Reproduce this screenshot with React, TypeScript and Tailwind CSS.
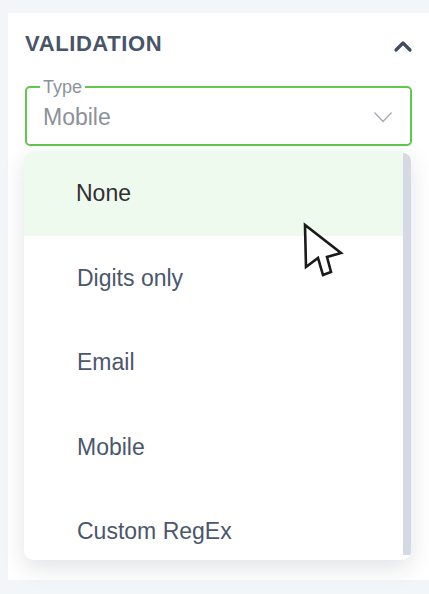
import React from "react";

const options = ["None", "Digits only", "Email", "Mobile", "Custom RegEx"];

const App = () => {
  return (
    <div
      className="relative w-[429px] h-[594px] overflow-hidden bg-[#f3f6f9] pt-[13px] pl-[8px]"
      style={{ fontFamily: '"Liberation Sans", Arial, sans-serif' }}
    >
      <div className="h-[567px] bg-white px-[17px] pt-[18px]">
        {/* section header */}
        <div className="flex items-center justify-between h-[26px]">
          <h2 className="text-[22px] leading-[26px] font-bold tracking-[0.6px] text-[#47546a]">VALIDATION</h2>
          <svg width="20" height="14" viewBox="0 0 20 14" className="mr-[-1px] mt-[4px]">
            <path d="M3 11 L10 4 L17 11" fill="none" stroke="#3f4b5f" strokeWidth="3.2" strokeLinecap="round" strokeLinejoin="round" />
          </svg>
        </div>

        {/* select field */}
        <fieldset className="mt-[21px] h-[68px] border-2 border-solid border-[#5fc94c] rounded-[5px] pl-[13px] pr-[17px]">
          <legend className="px-[3px] text-[18px] leading-[18px] text-[#8d939b]">Type</legend>
          <div className="flex items-center justify-between pl-[3px] mt-[6px]">
            <span className="text-[23px] leading-[30px] text-[#8b9199]">Mobile</span>
            <svg width="20" height="12" viewBox="0 0 20 12">
              <path d="M1.5 1.5 L10 10.5 L18.5 1.5" fill="none" stroke="#a3a9b1" strokeWidth="1.3" />
            </svg>
          </div>
        </fieldset>

        {/* dropdown menu */}
        <div className="mt-[5px] ml-[-1px] w-[387px] h-[409px] flex bg-white rounded-[9px] overflow-hidden shadow-[0_8px_22px_rgba(30,40,60,0.13)]">
          <ul className="flex-1">
            {options.map((opt, i) => (
              <li
                key={opt}
                className={
                  i === 0
                    ? "h-[84.5px] flex items-center pl-[52px] text-[23px] text-[#2f3033] bg-[#effaee]"
                    : "h-[84.5px] flex items-center pl-[53px] text-[23px] text-[#4a576d]"
                }
              >
                {opt}
              </li>
            ))}
          </ul>
          <div className="w-[8px] pt-[2px]">
            <div className="h-[402px] bg-[#d4d9e3] rounded-tr-[8px]" />
          </div>
        </div>
      </div>

      {/* mouse pointer */}
      <svg className="absolute left-[302px] top-[222px]" width="44" height="58" viewBox="0 0 44 58">
        <path
          d="M3 3 L4 45 L16 36 L21 53 L29 50 L25 35 L39 31 Z"
          fill="#ffffff"
          stroke="#1a1a1a"
          strokeWidth="2.6"
          strokeLinejoin="miter"
        />
      </svg>
    </div>
  );
};

export default App;
